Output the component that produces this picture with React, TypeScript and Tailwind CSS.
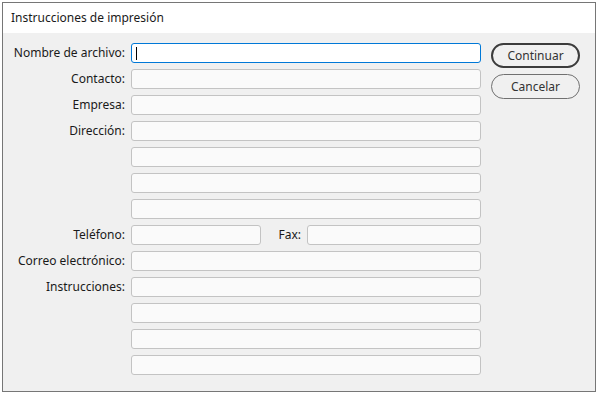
const font = { fontFamily: '"Noto Sans", "Open Sans", sans-serif' };

type Row = { label?: string; focus?: boolean; fax?: boolean };

const rows: Row[] = [
  { label: "Nombre de archivo:", focus: true },
  { label: "Contacto:" },
  { label: "Empresa:" },
  { label: "Dirección:" },
  {},
  {},
  {},
  { label: "Teléfono:", fax: true },
  { label: "Correo electrónico:" },
  { label: "Instrucciones:" },
  {},
  {},
  {},
];

const Field = ({ className = "", focus = false }: { className?: string; focus?: boolean }) => (
  <div
    className={
      "h-[20px] rounded-[3px] border flex items-center " +
      (focus ? "border-[#0078d7] bg-white " : "border-[#c3c3c3] bg-[#fafafa] ") +
      className
    }
  >
    {focus && <span className="ml-[4px] w-px h-[13px] bg-black" />}
  </div>
);

export default function App() {
  return (
    <div className="w-[598px] h-[393px] bg-white pt-[2px] pl-[2px]" style={font}>
      <div className="w-[594px] h-[390px] border border-[#767676] flex flex-col">
        <div className="h-[30px] bg-white flex items-center pl-[8px] text-[12px] text-[#1a1a1a]">
          Instrucciones de impresión
        </div>
        <div className="flex-1 bg-[#f0f0f0] flex pt-[10px]">
          <div className="flex flex-col gap-[6px]">
            {rows.map((r, i) => (
              <div key={i} className="flex items-center gap-[6px] h-[20px] text-[12px] text-[#1a1a1a]">
                <div className="w-[122px] text-right whitespace-nowrap">{r.label}</div>
                {r.fax ? (
                  <>
                    <Field className="w-[130px]" />
                    <div className="w-[34px] text-right">Fax:</div>
                    <Field className="w-[174px]" />
                  </>
                ) : (
                  <Field className="w-[350px]" focus={r.focus} />
                )}
              </div>
            ))}
          </div>
          <div className="ml-[10px] flex flex-col gap-[6px] text-[12px] text-[#333333]">
            <button className="w-[89px] h-[25px] rounded-full border-2 border-[#3c3c3c] bg-[#f0f0f0] flex items-center justify-center">
              Continuar
            </button>
            <button className="w-[89px] h-[25px] rounded-full border border-[#707070] bg-[#f0f0f0] flex items-center justify-center">
              Cancelar
            </button>
          </div>
        </div>
      </div>
    </div>
  );
}
